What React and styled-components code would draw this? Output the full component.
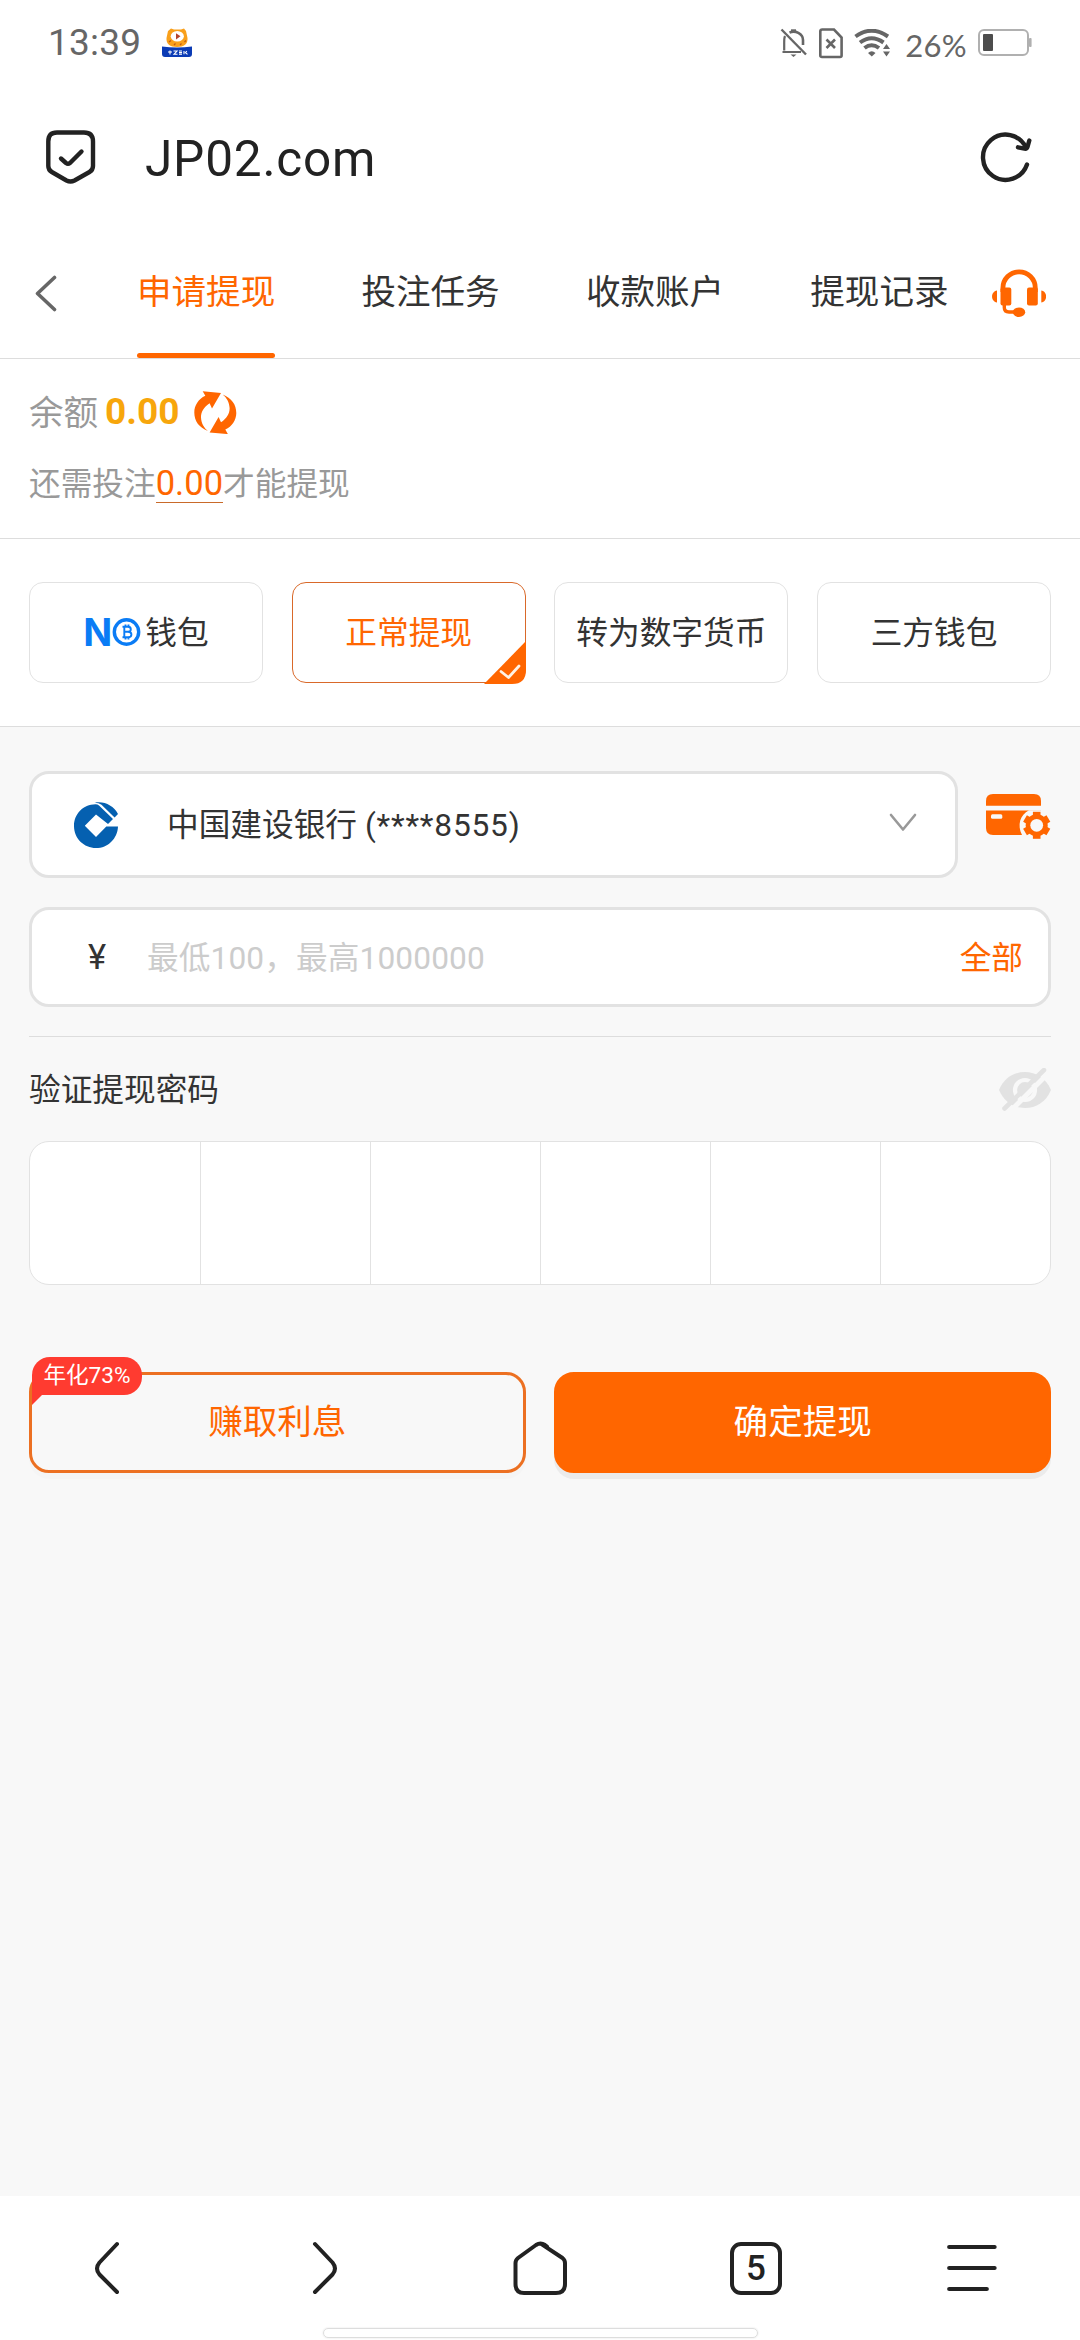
import React, { useState } from 'react';
import styled, { createGlobalStyle } from 'styled-components';

const tabs = ['申请提现', '投注任务', '收款账户', '提现记录'];

const methods = [
  { id: 'no', label: '钱包', logo: true },
  { id: 'normal', label: '正常提现' },
  { id: 'crypto', label: '转为数字货币' },
  { id: 'third', label: '三方钱包' },
];

const MascotIcon = () => (
  <svg width='30' height='30' viewBox='0 0 30 30'>
    <path d='M6 3 L9 0.5 L12 1.5 H19 L22 0.5 L24 3 L25.5 10 C26 16 22 19 15 19 C8 19 4 16 4.5 10 Z' fill='#f9a01b' />
    <ellipse cx='15.3' cy='8.2' rx='6.6' ry='5.2' fill='#fff' />
    <path d='M14 5.2 L18.5 8.3 L14 11.4 Z' fill='#b5442c' />
    <path d='M7 14 L9 12.5 M12 17 L13.5 15.5 M18 17 L19.5 15.5 M22.5 14 L24 12.5' stroke='#c25a10' strokeWidth='1.2' />
    <path d='M0 18.5 Q15 20.5 30 18.5 V26 Q30 29 27 29 H3 Q0 29 0 26 Z' fill='#0b3bb5' />
    <path d='M6 24 H10 M8 22.5 V26.5 M11.5 23 H15 L12 26.3 H15.5 M17 23 H20 M17 24.6 H20 M17 26.3 H20 M22 23 V26.3 M24.8 23 L23.5 24.6 L25.5 26.3' stroke='#fff' strokeWidth='1.1' fill='none' />
  </svg>
);

const BellOffIcon = () => (
  <svg width='28' height='30' viewBox='0 0 28 30' fill='none' stroke='#666' strokeWidth='2.2'>
    <path d='M5 8 C4 10 4.2 13 4.2 16 V22.5 M2.5 24 H21' />
    <path d='M9.5 4.6 C15 2 23 5.5 23 12 V17' strokeWidth='2.6' />
    <path d='M1.5 1.5 L26 26.5' strokeWidth='2.4' />
    <path d='M10.5 26.5 H16.5 L13.5 29 Z' fill='#666' stroke='none' />
    <path d='M11 2.4 H16' />
  </svg>
);

const SimIcon = () => (
  <svg width='24' height='31' viewBox='0 0 24 31' fill='none' stroke='#666' strokeWidth='2.6'>
    <path d='M3.2 1.5 H15 L22.6 9.5 V27.5 Q22.6 29 21 29 H3 Q1.3 29 1.3 27.5 V3.2 Q1.3 1.5 3.2 1.5 Z' />
    <path d='M7.5 11.5 L16 20 M16 11.5 L7.5 20' />
  </svg>
);

const WifiIcon = () => (
  <svg width='37' height='28' viewBox='0 0 37 28' fill='none' stroke='#666' strokeWidth='4'>
    <path d='M1.5 7.5 Q17.5 -4 34 7.5' />
    <path d='M6 13.5 Q17.5 5 29.5 13.5' />
    <path d='M10.5 19 Q17.5 13.5 25 19' />
    <path d='M14 24 Q17.8 20.5 21.5 24 L17.8 27.5 Z' fill='#666' stroke='none' />
    <path d='M29 20 L32.5 15 L36 20 Z M29 22.5 H36 L32.5 27.5 Z' fill='#666' stroke='none' />
  </svg>
);

const BatteryIcon = () => (
  <svg width='54' height='28' viewBox='0 0 54 28'>
    <rect x='1' y='1' width='49' height='25' rx='5' fill='none' stroke='#b0b0b0' strokeWidth='2' />
    <rect x='5' y='5' width='10' height='17' rx='1' fill='#4d4d4d' />
    <rect x='51' y='9' width='2.6' height='9' rx='1' fill='#b0b0b0' />
  </svg>
);

const ShieldIcon = () => (
  <svg width='50' height='54' viewBox='0 0 50 54' fill='none' stroke='#222' strokeWidth='4.4' strokeLinecap='round' strokeLinejoin='round'>
    <path d='M11 2.5 H38 Q47 2.5 47 11.5 V36 Q47 40 43.5 42 L28.5 50.5 Q24.5 52.5 20.5 50.5 L5.8 42 Q2.3 40 2.3 36 V11.5 Q2.3 2.5 11 2.5 Z' />
    <path d='M15 28.5 L20 33 Q22 34.5 24 33 L35.5 21.5' />
  </svg>
);

const ReloadIcon = () => (
  <svg width='54' height='54' viewBox='0 0 54 54' fill='none' stroke='#222' strokeWidth='4.4' strokeLinecap='round' strokeLinejoin='round'>
    <path d='M47 34.5 A22.6 22.6 0 1 1 46 17.5' />
    <path d='M38 17.3 L44.5 18.6 Q46.8 19 47.5 16.8 L49.3 10.5' />
  </svg>
);

const BackIcon = () => (
  <svg width='24' height='38' viewBox='0 0 24 38' fill='none' stroke='#666' strokeWidth='3.6' strokeLinecap='round' strokeLinejoin='round'>
    <path d='M20.5 3.5 L3.5 19.5 L20.5 35.5' />
  </svg>
);

const HeadsetIcon = () => (
  <svg width='54' height='49' viewBox='0 0 54 49' fill='#f60'>
    <path d='M10.9 23 V19 A16.2 16.2 0 0 1 43.3 19 V23' fill='none' stroke='#f60' strokeWidth='4.8' />
    <rect x='8.5' y='18.5' width='10.8' height='18' rx='2' />
    <rect x='35' y='18.5' width='10.8' height='18' rx='2' />
    <path d='M5 21.5 V33.5 C-1.6 32.5 -1.6 22.5 5 21.5 Z M49.3 21.5 V33.5 C55.8 32.5 55.8 22.5 49.3 21.5 Z' />
    <path d='M12.3 36 V38.5 Q12.3 43 17 43 H24' fill='none' stroke='#f60' strokeWidth='3.4' />
    <ellipse cx='27' cy='43.2' rx='6.2' ry='4.8' />
  </svg>
);

const SyncIcon = () => (
  <svg width='43' height='43' viewBox='0 0 43 43' fill='#f60'>
    <path d='M14 40 C5 36.5 0.3 30 0.3 21.5 C0.3 14.5 4.5 8 11.3 4.8 L8.7 0.3 L27 2 L18 17.5 L15.6 12.2 C10 16 6.8 21 7 26.5 C7.2 32 10 37 14 40 Z' />
    <path d='M14 40 C5 36.5 0.3 30 0.3 21.5 C0.3 14.5 4.5 8 11.3 4.8 L8.7 0.3 L27 2 L18 17.5 L15.6 12.2 C10 16 6.8 21 7 26.5 C7.2 32 10 37 14 40 Z' transform='rotate(180 21.3 21.7)' />
  </svg>
);

const CoinIcon = () => (
  <svg width='29' height='28' viewBox='0 0 29 28' fill='none' stroke='#0a7cf5'>
    <circle cx='14.5' cy='14' r='12.2' strokeWidth='3.4' />
    <path d='M10.5 8.7 H16 Q18.8 8.7 18.8 11.2 Q18.8 13.8 16 13.8 H12.5 M16 13.8 Q19.4 13.8 19.4 16.5 Q19.4 19.3 16 19.3 H10.5 M12.3 8.7 V19.3 M13.5 6.6 V8.7 M16.5 6.6 V8.7 M13.5 19.3 V21.4 M16.5 19.3 V21.4' strokeWidth='1.9' />
  </svg>
);

const BankLogo = () => (
  <svg width='45' height='47' viewBox='0 0 45 47' fill='#0560b0'>
    <path d='M44 24.4 C43.5 36.5 34 46 22 46 C10 46 0 36.5 0 24 C0 12 9 2.4 21.5 2.2 Q23.5 2.2 25 3.5 L39 17 L34 22 L22 12.6 L10.8 23.7 L22 35 L32.3 24.4 Z' />
    <path d='M20.5 0.8 C30 -1.2 39.5 3.5 44 12 L40.6 15.5 L27.5 2.8 Q24.5 0.6 20.5 0.8 Z' />
  </svg>
);

const ChevronDown = () => (
  <svg width='28' height='20' viewBox='0 0 28 20' fill='none' stroke='#999' strokeWidth='2.6' strokeLinecap='round' strokeLinejoin='round'>
    <path d='M2 2 L14 16.5 L26 2' />
  </svg>
);

const CardSettingsIcon = () => (
  <svg width='65' height='46' viewBox='0 0 65 46' fill='#f60'>
    <path d='M0 11.8 V7 Q0 0 7 0 H48 Q55 0 55 7 V11.8 Z' />
    <path d='M0 16.5 H55 V41 H7 Q0 41 0 34 Z' />
    <rect x='5' y='20.2' width='11.3' height='4.6' rx='1.5' fill='#f8f8f8' />
    <path d='M43 16.3 H65 V46 H36 V41 C31 31 34 21 43 16.3 Z' fill='#f8f8f8' />
    <g stroke='#f60' strokeWidth='7.6'>
      {[0, 60, 120].map((deg) => (
        <path key={deg} d='M50.7 17.8 V44.8' transform={`rotate(${deg} 50.7 31.3)`} />
      ))}
    </g>
    <circle cx='50.7' cy='31.3' r='11' />
    <circle cx='50.7' cy='31.3' r='6.4' fill='#f8f8f8' />
  </svg>
);

const EyeOffIcon = () => (
  <svg width='52' height='43' viewBox='0 0 52 43' fill='none'>
    <path d='M0 22 C5 10 15 4 26 4 C37 4 47 10 52 22 C47 34 37 40 26 40 C15 40 5 34 0 22 Z' fill='#e2e2e2' />
    <circle cx='26' cy='22' r='10' stroke='#f8f8f8' strokeWidth='4.2' />
    <path d='M13.5 41 L50 4.5' stroke='#f8f8f8' strokeWidth='5' />
    <path d='M5.5 40.5 L45 2' stroke='#e2e2e2' strokeWidth='4.6' strokeLinecap='round' />
  </svg>
);

const CornerCheck = () => (
  <Corner width='42' height='43' viewBox='0 0 42 43'>
    <path d='M42 0 V29 Q42 43 28 43 H0 Z' fill='#f60' />
    <path d='M17 30.5 L24.5 36.5 L35 25' fill='none' stroke='#fff3e6' strokeWidth='2.8' strokeLinecap='round' strokeLinejoin='round' />
  </Corner>
);

const navIcons = [
  <path key='back' d='M36 3 L18.5 21.5 Q13.5 27.5 18.5 33.5 L36 51' />,
  <path key='next' d='M18 3 L35.5 21.5 Q40.5 27.5 35.5 33.5 L18 51' />,
  <path key='home' d='M28.5 3.2 L49.5 17 Q52 19 52 22 V43 Q52 52 43 52 H11 Q2.5 52 2.5 43 V22 Q2.5 19 5 17 L23 4 Q27.5 1 32 4 L34 5.5' />,
];

const App = () => {
  const [activeTab, setActiveTab] = useState(tabs[0]);
  const [method, setMethod] = useState('normal');
  const [amount, setAmount] = useState('');

  return (
    <>
      <GlobalStyle />
      <Page>
        <StatusBar>
          <Clock>13:39</Clock>
          <MascotIcon />
          <StatusIcons>
            <BellOffIcon />
            <SimIcon />
            <WifiIcon />
            <Percent>26%</Percent>
            <BatteryIcon />
          </StatusIcons>
        </StatusBar>

        <AddressBar>
          <ShieldIcon />
          <Address>JP02.com</Address>
          <ReloadIcon />
        </AddressBar>

        <TabBar>
          <BackIcon />
          <Tabs>
            {tabs.map((tab) => (
              <Tab key={tab} $active={tab === activeTab} onClick={() => setActiveTab(tab)}>
                {tab}
              </Tab>
            ))}
          </Tabs>
          <HeadsetIcon />
        </TabBar>

        <Balance>
          <BalanceRow>
            <span>余额</span>
            <strong>0.00</strong>
            <SyncIcon />
          </BalanceRow>
          <Requirement>
            还需投注<em>0.00</em>才能提现
          </Requirement>
        </Balance>

        <Methods>
          {methods.map(({ id, label, logo }) => (
            <Method key={id} $active={id === method} onClick={() => setMethod(id)}>
              {logo && (
                <NoLogo>
                  N<CoinIcon />
                </NoLogo>
              )}
              {label}
              {id === method && <CornerCheck />}
            </Method>
          ))}
        </Methods>

        <Form>
          <BankRow>
            <BankSelect>
              <BankLogo />
              <BankName>
                中国建设银行 <CardTail>(****8555)</CardTail>
              </BankName>
              <ChevronDown />
            </BankSelect>
            <CardSettingsIcon />
          </BankRow>

          <AmountField>
            <Currency>¥</Currency>
            <input
              type='text'
              placeholder='最低100，最高1000000'
              value={amount}
              onChange={(e) => setAmount(e.target.value)}
            />
            <All>全部</All>
          </AmountField>

          <PasswordHead>
            <span>验证提现密码</span>
            <EyeOffIcon />
          </PasswordHead>
          <PinBox>
            {[...Array(6)].map((_, index) => (
              <PinCell key={index} />
            ))}
          </PinBox>

          <Actions>
            <Button $outline>
              <Badge>年化73%</Badge>
              赚取利息
            </Button>
            <Button>确定提现</Button>
          </Actions>
        </Form>

        <BottomNav>
          {navIcons.map((icon) => (
            <NavItem key={icon.key}>
              <svg width='54' height='54' viewBox='0 0 54 54' fill='none' stroke='#222' strokeWidth='4' strokeLinecap='round' strokeLinejoin='round'>
                {icon}
              </svg>
            </NavItem>
          ))}
          <NavItem>
            <TabCount>5</TabCount>
          </NavItem>
          <NavItem>
            <svg width='50' height='54' viewBox='0 0 50 54' stroke='#222' strokeWidth='4.2' strokeLinecap='round'>
              <path d='M2.2 6 H47.6 M2.2 27 H47.6 M2.2 48 H39.8' />
            </svg>
          </NavItem>
        </BottomNav>
        <GestureArea>
          <GesturePill />
        </GestureArea>
      </Page>
    </>
  );
};

export default App;

const GlobalStyle = createGlobalStyle`
  * {
    box-sizing: border-box;
    margin: 0;
    padding: 0;
  }
  body {
    background: #fff;
    color: #333;
    font-family: Roboto, 'Noto Sans CJK SC', sans-serif;
    font-size: 31.68px;
  }
  svg {
    display: block;
    flex-shrink: 0;
  }
  button,
  input {
    font: inherit;
    color: inherit;
    border: none;
    outline: none;
    background: none;
  }
`;

const Page = styled.div`
  width: 1080px;
  height: 2340px;
  display: flex;
  flex-direction: column;
  overflow: hidden;
  background: #fff;
`;

const StatusBar = styled.header`
  height: 86px;
  padding: 0 48px;
  display: flex;
  align-items: center;
`;

const Clock = styled.span`
  width: 114px;
  padding-bottom: 1px;
  font-size: 37px;
  letter-spacing: 0.2px;
  line-height: 1;
  color: #666;
`;

const StatusIcons = styled.div`
  margin-left: auto;
  display: flex;
  align-items: center;
  gap: 11px;
`;

const Percent = styled.span`
  margin: 5px 0 0 3px;
  font-family: Lato, sans-serif;
  font-size: 31px;
  letter-spacing: 0.3px;
  line-height: 1;
  color: #666;
`;

const AddressBar = styled.div`
  height: 142px;
  padding: 0 46px;
  display: flex;
  align-items: center;
`;

const Address = styled.div`
  flex: 1;
  margin-left: 49px;
  padding-top: 5px;
  font-size: 49.5px;
  letter-spacing: 0.8px;
  line-height: 1;
  color: #222;
`;

const TabBar = styled.nav`
  height: 131px;
  padding: 0 34px;
  display: flex;
  align-items: center;
  border-bottom: 1px solid #ddd;
`;

const Tabs = styled.div`
  flex: 1;
  height: 100%;
  margin: 0 43.5px 0 79px;
  display: flex;
  justify-content: space-between;
`;

const Tab = styled.button`
  padding-bottom: 8px;
  font-size: 34.56px;
  color: ${({ $active }) => ($active ? '#f60' : '#333')};
  position: relative;
  &::after {
    content: '';
    display: ${({ $active }) => ($active ? 'block' : 'none')};
    position: absolute;
    left: 0;
    right: 0;
    bottom: 0;
    height: 5px;
    border-radius: 3px;
    background: #f60;
  }
`;

const Balance = styled.section`
  height: 180px;
  padding: 30px 29px 0;
  border-bottom: 1px solid #ddd;
  color: #999;
`;

const BalanceRow = styled.div`
  height: 46px;
  display: flex;
  align-items: center;
  font-size: 34.56px;
  span {
    padding-bottom: 5px;
  }
  strong {
    margin: 0 14px 0 7px;
    padding-bottom: 2px;
    font-size: 37px;
    color: #f7a60c;
  }
`;

const Requirement = styled.p`
  margin-top: 29px;
  line-height: 42px;
  em {
    display: inline-block;
    font-style: normal;
    font-size: 34.56px;
    line-height: 38px;
    color: #f60;
    border-bottom: 1px solid #c96a2a;
  }
`;

const Methods = styled.section`
  height: 188px;
  padding: 43px 29px 0;
  display: grid;
  grid-template-columns: repeat(4, 1fr);
  gap: 28.8px;
  border-bottom: 1px solid #ddd;
`;

const Method = styled.button`
  height: 101px;
  padding-bottom: 6px;
  display: flex;
  align-items: center;
  justify-content: center;
  border: 1px solid ${({ $active }) => ($active ? '#d9692a' : '#e2e2e2')};
  border-radius: 14px;
  background: #fff;
  color: ${({ $active }) => ($active ? '#f60' : '#333')};
  position: relative;
`;

const Corner = styled.svg`
  position: absolute;
  right: -1px;
  bottom: -2px;
`;

const NoLogo = styled.span`
  margin-right: 4px;
  padding-top: 5px;
  display: flex;
  align-items: center;
  font-family: Inter, sans-serif;
  font-size: 38px;
  font-weight: 700;
  line-height: 1;
  color: #0a7cf5;
`;

const Form = styled.main`
  flex: 1;
  padding: 44px 29px 0;
  background: #f8f8f8;
`;

const BankRow = styled.div`
  display: flex;
  align-items: center;
  justify-content: space-between;
  > svg {
    margin-bottom: 16px;
  }
`;

const BankSelect = styled.div`
  width: 929px;
  height: 107px;
  padding: 2px 38px 0 42px;
  display: flex;
  align-items: center;
  border: 3px solid #e2e2e2;
  border-radius: 20px;
  background: #fff;
  svg:last-child {
    margin-bottom: 6px;
  }
`;

const BankName = styled.span`
  flex: 1;
  margin-left: 48px;
  padding-bottom: 8px;
`;

const CardTail = styled.span`
  letter-spacing: 0.8px;
`;

const AmountField = styled.div`
  height: 100px;
  margin-top: 29px;
  padding: 0 25px 0 56px;
  display: flex;
  align-items: center;
  border: 3px solid #e2e2e2;
  border-radius: 20px;
  background: #fff;
  input {
    flex: 1;
    min-width: 0;
    padding-top: 2px;
    letter-spacing: 0.1px;
    &::placeholder {
      color: #ccc;
    }
  }
`;

const Currency = styled.span`
  width: 59px;
  font-size: 34.56px;
`;

const All = styled.button`
  padding-bottom: 5px;
  color: #f60;
`;

const PasswordHead = styled.div`
  height: 105px;
  margin-top: 29px;
  display: flex;
  align-items: center;
  justify-content: space-between;
  border-top: 1px solid #ddd;
  span {
    padding-bottom: 4px;
  }
`;

const PinBox = styled.div`
  height: 144px;
  display: grid;
  grid-template-columns: repeat(6, 1fr);
  border: 1px solid #e2e2e2;
  border-radius: 20px;
  background: #fff;
  overflow: hidden;
`;

const PinCell = styled.div`
  & + & {
    border-left: 1px solid #e2e2e2;
  }
`;

const Actions = styled.div`
  margin-top: 87px;
  display: grid;
  grid-template-columns: 1fr 1fr;
  gap: 28.8px;
`;

const Button = styled.button`
  height: 101px;
  padding-bottom: 7px;
  font-size: 34.56px;
  border-radius: 20px;
  border: 3px solid ${({ $outline }) => ($outline ? '#ec7022' : '#f60')};
  background: ${({ $outline }) => ($outline ? '#f8f8f8' : '#f60')};
  color: ${({ $outline }) => ($outline ? '#f60' : '#fff')};
  box-shadow: 0 6px 0 ${({ $outline }) => ($outline ? 'rgba(0, 0, 0, 0.012)' : 'rgba(0, 0, 0, 0.05)')};
  position: relative;
`;

const Badge = styled.span`
  position: absolute;
  top: -18px;
  left: 0;
  width: 110px;
  height: 38px;
  line-height: 38px;
  font-size: 22.6px;
  text-align: center;
  color: #fff;
  background: #ff3b30;
  border-radius: 18px 18px 18px 0;
  &::after {
    content: '';
    position: absolute;
    top: 37px;
    left: 0;
    border-top: 11px solid #ff3b30;
    border-right: 11px solid transparent;
  }
`;

const BottomNav = styled.footer`
  height: 132px;
  padding-top: 12px;
  display: grid;
  grid-template-columns: repeat(5, 1fr);
`;

const NavItem = styled.div`
  display: flex;
  align-items: center;
  justify-content: center;
`;

const TabCount = styled.div`
  width: 52px;
  height: 53px;
  padding-top: 1px;
  display: flex;
  align-items: center;
  justify-content: center;
  border: 4px solid #222;
  border-radius: 11px;
  font-size: 35px;
  font-weight: 500;
  line-height: 1;
  color: #222;
`;

const GestureArea = styled.div`
  height: 12px;
  display: flex;
  justify-content: center;
`;

const GesturePill = styled.div`
  width: 435px;
  height: 10px;
  border: 1px solid #ddd;
  border-radius: 5px;
  box-shadow: 0 0 2px rgba(0, 0, 0, 0.12);
`;
